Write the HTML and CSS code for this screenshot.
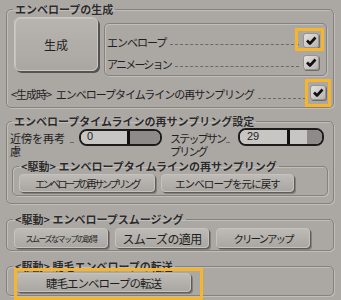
FILE: index.html
```html
<!DOCTYPE html>
<html lang="ja">
<head>
    <meta charset="UTF-8">
    <title>エンベロープ</title>
    <link rel="stylesheet" href="styles.css">
</head>
<body>

<div class="panel">
    <!-- エンベロープの生成 -->
    <fieldset class="group group-gen">
        <legend>エンベロープの生成</legend>
        <div class="gen-top">
            <button class="btn-big">生成</button>
            <div class="option-box">
                <div class="opt-row">
                    <span class="opt-label">エンベロープ</span>
                    <span class="leader"></span>
                    <span class="check"><svg viewBox="0 0 16 15" width="16" height="15"><path d="M4 7.5 L7 10.5 L12.5 4.5" /></svg></span>
                </div>
                <div class="opt-row">
                    <span class="opt-label opt-anim">アニメーション</span>
                    <span class="leader"></span>
                    <span class="check"><svg viewBox="0 0 16 15" width="16" height="15"><path d="M4 7.5 L7 10.5 L12.5 4.5" /></svg></span>
                </div>
            </div>
        </div>
        <div class="opt-row opt-resample">
            <span class="opt-label">&lt;生成時&gt; エンベロープタイムラインの再サンプリング</span>
            <span class="leader"></span>
            <span class="check"><svg viewBox="0 0 16 15" width="16" height="15"><path d="M4 7.5 L7 10.5 L12.5 4.5" /></svg></span>
        </div>
    </fieldset>

    <!-- 再サンプリング設定 -->
    <fieldset class="group group-resample">
        <legend>エンベロープタイムラインの再サンプリング設定</legend>
        <div class="param-row">
            <span class="param-label param-near">近傍を再考<br>慮</span>
            <span class="stub"></span>
            <div class="slider slider-near">
                <span class="slider-value">0</span>
                <span class="fill-light" style="width:46px"></span>
                <span class="thumb"></span>
                <span class="fill-dark"></span>
            </div>
            <span class="param-label param-step">ステップサン<br>プリング</span>
            <span class="stub"></span>
            <div class="slider slider-step">
                <span class="slider-value">29</span>
                <span class="fill-light" style="width:47px"></span>
                <span class="thumb"></span>
                <span class="fill-light" style="width:17px"></span>
                <span class="fill-dark"></span>
            </div>
        </div>
        <fieldset class="group sub-group">
            <legend>&lt;駆動&gt; エンベロープタイムラインの再サンプリング</legend>
            <div class="btn-row">
                <button class="btn btn-resample">エンベロープの再サンプリング</button>
                <button class="btn btn-restore">エンベロープを元に戻す</button>
            </div>
        </fieldset>
    </fieldset>

    <!-- スムージング -->
    <fieldset class="group group-smooth">
        <legend>&lt;駆動&gt; エンベロープスムージング</legend>
        <div class="btn-row">
            <button class="btn btn-map">スムーズなマップの取得</button>
            <button class="btn btn-apply">スムーズの適用</button>
            <button class="btn btn-clean">クリーンアップ</button>
        </div>
    </fieldset>

    <!-- 睫毛 -->
    <fieldset class="group group-lash">
        <legend>&lt;駆動&gt; 睫毛エンベロープの転送</legend>
        <button class="btn btn-lash">睫毛エンベロープの転送</button>
    </fieldset>
</div>

<!-- ハイライト枠 -->
<div class="mark mark-1"></div>
<div class="mark mark-2"></div>
<div class="mark mark-3"></div>

</body>
</html>
```

FILE: styles.css
```css
body {
    margin: 0;
    height: 300px;
    overflow: hidden;
    position: relative;
    background-color: #aba7a3;
    font-family: "Noto Sans CJK JP", "Noto Sans", sans-serif;
    font-size: 11px;
    color: #1e1e1e;
}
.panel {
    padding: 3px 7px 0 6px;
}
.group {
    margin: 0;
    min-width: 0;
    border: 1px solid #85817d;
    border-radius: 5px;
    box-shadow: inset 1px 1px 0 #c1bdb9, 1px 1px 0 #c1bdb9;
    padding: 2px 6px 4px 6px;
}
.group legend {
    padding: 0 2px;
    font-size: 11px;
    font-weight: bold;
    line-height: 12px;
    color: #2a2a2a;
    text-shadow: 0 0 1px #d6d3cf;
}

/* 生成 */
.gen-top {
    display: flex;
    gap: 6px;
    margin-left: 1px;
}
.btn-big {
    flex: 0 0 84px;
    height: 54px;
    padding: 0;
    font-family: inherit;
    font-size: 12px;
    color: #222;
    border: 1px solid #cbc8c4;
    border-radius: 6px;
    background: linear-gradient(#b8b4b0, #aaa6a2);
    box-shadow: inset 1px 1px 0 #c6c3bf, 2px 2px 0 #55524f;
}
.option-box {
    flex: 1;
    box-sizing: border-box;
    height: 53px;
    margin-top: 6px;
    padding: 5px 7px 0 2px;
    border: 1px solid #85817d;
    border-radius: 5px;
    box-shadow: inset 1px 1px 0 #c1bdb9, 1px 1px 0 #c1bdb9;
}
.opt-row {
    display: flex;
    align-items: flex-end;
    height: 22px;
}
.opt-label {
    line-height: 13px;
    margin-bottom: 2px;
    white-space: nowrap;
    letter-spacing: -1px;
    word-spacing: 3px;
}
.opt-anim {
    letter-spacing: -1.8px;
}
.leader {
    flex: 1;
    margin: 0 4px 6px 4px;
    border-bottom: 1px dashed #6d6965;
}
.check {
    width: 16px;
    height: 15px;
    margin-bottom: 3px;
    box-sizing: border-box;
    border: 1px solid #97938f;
    border-radius: 3px;
    background: linear-gradient(135deg, #e4e2df, #b7b4b0);
    box-shadow: 1px 1px 0 #6e6b68;
}
.check svg {
    display: block;
    margin: -1px 0 0 -1px;
}
.check path {
    fill: none;
    stroke: #111;
    stroke-width: 2.6;
    stroke-linejoin: round;
}
.opt-resample {
    margin: 5px 1px 0 -2px;
}
.opt-resample .leader {
    margin-bottom: 4px;
}

/* 再サンプリング設定 */
.group-resample {
    margin-top: 7px;
    padding: 1px 5px 7px 5px;
}
.param-row {
    display: flex;
    align-items: flex-start;
}
.param-label {
    margin-top: 4px;
    line-height: 12.5px;
    white-space: nowrap;
}
.param-near {
    width: 60px;
    margin-left: -2px;
}
.param-step {
    width: 56px;
    margin-left: 8px;
    letter-spacing: -1.8px;
}
.stub {
    width: 4px;
    margin-top: 14px;
    border-bottom: 1px dashed #6d6965;
}
.slider {
    position: relative;
    display: flex;
    box-sizing: border-box;
    border: 2px solid #1c1c1c;
    border-radius: 8px;
    overflow: hidden;
    background: #c8c6c3;
}
.slider-near {
    width: 83px;
    height: 17px;
    margin: 1px 0 0 5px;
}
.slider-step {
    width: 86px;
    height: 18px;
    margin-left: 8px;
}
.slider-value {
    position: absolute;
    left: 6px;
    top: -1px;
    font-size: 11px;
    line-height: 12px;
    font-family: "Liberation Sans", sans-serif;
}
.slider-step .slider-value {
    left: 7px;
    top: 0;
}
.fill-light {
    background: #c8c6c3;
}
.thumb {
    width: 3px;
    background: #111;
}
.fill-dark {
    flex: 1;
    background: #8d8a87;
}

.sub-group {
    margin: 3px 0 0 0;
    padding: 2px 6px 3px 6px;
}

/* ボタン */
.btn-row {
    display: flex;
    gap: 6px;
}
.btn {
    padding: 0;
    font-family: inherit;
    color: #1e1e1e;
    white-space: nowrap;
    overflow: hidden;
    border: 1px solid #c6c3bf;
    border-radius: 4px;
    background: linear-gradient(#bebbb7, #aaa6a2);
    box-shadow: 1px 1px 0 #5e5b58, 2px 2px 0 rgba(60, 58, 55, 0.35);
}
.btn-resample {
    width: 136px;
    height: 18px;
    font-size: 10px;
    letter-spacing: -2.5px;
}
.btn-restore {
    width: 133px;
    height: 18px;
    font-size: 10.5px;
    letter-spacing: -0.9px;
}
.group-smooth {
    margin-top: 9px;
    padding: 3px 6px 2px 6px;
}
.group-smooth .btn-row {
    gap: 7px;
    margin-left: 1px;
}
.group-smooth .btn {
    width: 94px;
    height: 20px;
}
.btn-map {
    font-size: 8px;
    letter-spacing: -1.5px;
}
.btn-apply {
    font-size: 12px;
    letter-spacing: -0.6px;
}
.btn-clean {
    font-size: 10.5px;
    letter-spacing: -2px;
}
.group-lash {
    margin-top: 9px;
    padding: 1px 6px 3px 6px;
}
.btn-lash {
    width: 175px;
    height: 19px;
    margin-left: 3px;
    font-size: 11.5px;
    letter-spacing: -1px;
}

/* ハイライト枠 */
.mark {
    position: absolute;
    box-sizing: border-box;
    border: 3px solid #f7b52c;
}
.mark-1 {
    left: 295px;
    top: 28px;
    width: 29px;
    height: 23px;
}
.mark-2 {
    left: 305px;
    top: 79px;
    width: 26px;
    height: 28px;
}
.mark-3 {
    left: 14px;
    top: 268px;
    width: 189px;
    height: 32px;
}
```
